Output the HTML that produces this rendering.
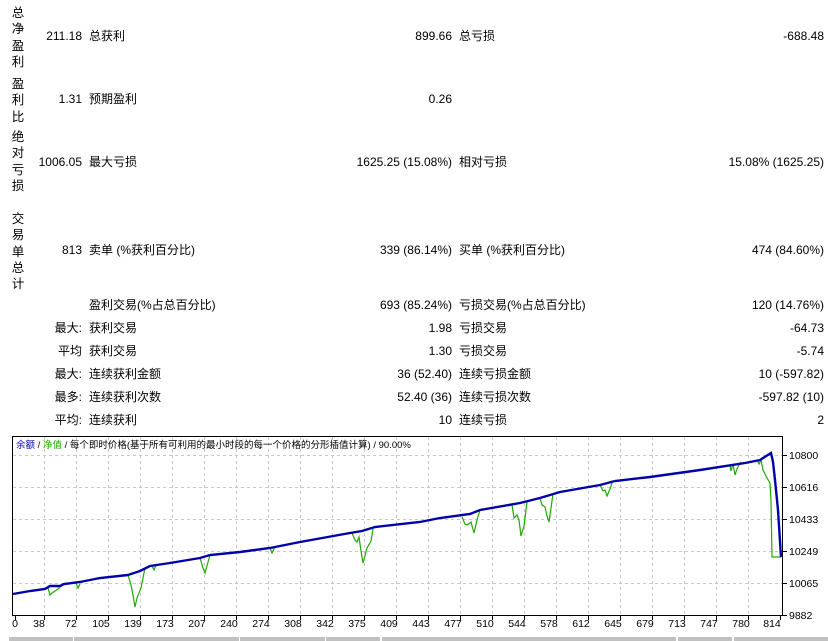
<!DOCTYPE html><html><head><meta charset="utf-8"><style>
body{margin:0;width:828px;height:641px;background:#fff;position:relative;overflow:hidden;font-family:"Liberation Sans","Noto Sans CJK SC",sans-serif;font-size:12px;color:#000}
.t{position:absolute;white-space:nowrap;line-height:14px}
.r{text-align:right}
.v{position:absolute;left:10px;width:16px;line-height:16.3px;text-align:center;font-size:12.5px}
</style></head><body>
<div class="v" style="top:5px">总<br>净<br>盈<br>利</div>
<div class="v" style="top:76px">盈<br>利<br>比</div>
<div class="v" style="top:129px">绝<br>对<br>亏<br>损</div>
<div class="v" style="top:211px">交<br>易<br>单<br>总<br>计</div>

<div class="t r" style="right:746px;top:29px">211.18</div><div class="t" style="left:89px;top:29px">总获利</div>
<div class="t r" style="right:376px;top:29px">899.66</div><div class="t" style="left:459px;top:29px">总亏损</div>
<div class="t r" style="right:4px;top:29px">-688.48</div>

<div class="t r" style="right:746px;top:92px">1.31</div><div class="t" style="left:89px;top:92px">预期盈利</div>
<div class="t r" style="right:376px;top:92px">0.26</div>

<div class="t r" style="right:746px;top:155px">1006.05</div><div class="t" style="left:89px;top:155px">最大亏损</div>
<div class="t r" style="right:376px;top:155px">1625.25 (15.08%)</div><div class="t" style="left:459px;top:155px">相对亏损</div>
<div class="t r" style="right:4px;top:155px">15.08% (1625.25)</div>

<div class="t r" style="right:746px;top:243px">813</div><div class="t" style="left:89px;top:243px">卖单 (%获利百分比)</div>
<div class="t r" style="right:376px;top:243px">339 (86.14%)</div><div class="t" style="left:459px;top:243px">买单 (%获利百分比)</div>
<div class="t r" style="right:4px;top:243px">474 (84.60%)</div>

<div class="t" style="left:89px;top:298px">盈利交易(%占总百分比)</div>
<div class="t r" style="right:376px;top:298px">693 (85.24%)</div><div class="t" style="left:459px;top:298px">亏损交易(%占总百分比)</div>
<div class="t r" style="right:4px;top:298px">120 (14.76%)</div>

<div class="t r" style="right:746px;top:321px">最大:</div><div class="t" style="left:89px;top:321px">获利交易</div>
<div class="t r" style="right:376px;top:321px">1.98</div><div class="t" style="left:459px;top:321px">亏损交易</div>
<div class="t r" style="right:4px;top:321px">-64.73</div>

<div class="t r" style="right:746px;top:344px">平均</div><div class="t" style="left:89px;top:344px">获利交易</div>
<div class="t r" style="right:376px;top:344px">1.30</div><div class="t" style="left:459px;top:344px">亏损交易</div>
<div class="t r" style="right:4px;top:344px">-5.74</div>

<div class="t r" style="right:746px;top:367px">最大:</div><div class="t" style="left:89px;top:367px">连续获利金额</div>
<div class="t r" style="right:376px;top:367px">36 (52.40)</div><div class="t" style="left:459px;top:367px">连续亏损金额</div>
<div class="t r" style="right:4px;top:367px">10 (-597.82)</div>

<div class="t r" style="right:746px;top:390px">最多:</div><div class="t" style="left:89px;top:390px">连续获利次数</div>
<div class="t r" style="right:376px;top:390px">52.40 (36)</div><div class="t" style="left:459px;top:390px">连续亏损次数</div>
<div class="t r" style="right:4px;top:390px">-597.82 (10)</div>

<div class="t r" style="right:746px;top:413px">平均:</div><div class="t" style="left:89px;top:413px">连续获利</div>
<div class="t r" style="right:376px;top:413px">10</div><div class="t" style="left:459px;top:413px">连续亏损</div>
<div class="t r" style="right:4px;top:413px">2</div>

<svg style="position:absolute;left:0;top:0" width="828" height="641" font-family="Liberation Sans, Noto Sans CJK SC, sans-serif" font-size="11">
<g stroke="#c8c8c8" stroke-dasharray="3,3" stroke-width="1">
<path d="M13 455.5H782M13 487.5H782M13 519.5H782M13 551.5H782M13 583.5H782"/>
<path d="M44.5 437V614M76.5 437V614M108.5 437V614M140.5 437V614M172.5 437V614M204.5 437V614M236.5 437V614M268.5 437V614M300.5 437V614M332.5 437V614M364.5 437V614M396.5 437V614M428.5 437V614M460.5 437V614M492.5 437V614M524.5 437V614M556.5 437V614M588.5 437V614M620.5 437V614M652.5 437V614M684.5 437V614M716.5 437V614M748.5 437V614"/>
</g>
<rect x="12.5" y="436.5" width="770" height="179" fill="none" stroke="#000"/>
<path d="M783 455.5h4M783 487.5h4M783 519.5h4M783 551.5h4M783 583.5h4M783 615.5h4M15.5 616v4M44.5 616v4M76.5 616v4M108.5 616v4M140.5 616v4M172.5 616v4M204.5 616v4M236.5 616v4M268.5 616v4M300.5 616v4M332.5 616v4M364.5 616v4M396.5 616v4M428.5 616v4M460.5 616v4M492.5 616v4M524.5 616v4M556.5 616v4M588.5 616v4M620.5 616v4M652.5 616v4M684.5 616v4M716.5 616v4M748.5 616v4M780.5 616v4" stroke="#000"/>
<path fill="none" stroke="#1faa00" stroke-width="1.2" d="M48 588 L50 595 L52 593 L58 589 L62 585 M76 583 L78 588 L80 584 M128 575 L131 585 L133 595 L135 607 L137 598 L141 588 L145 568 M152 566 L154 570 L156 565 M200 558 L203 568 L205 573 L210 555 M270 548 L272 553 L275 547 M352 533 L355 540 L357 542 L359 537 L361 551 L363 563 L367 548 L371 541 L373 529 M462 517 L465 524 L467 525 L471 522 L474 533 L477 520 L480 510 M512 505 L514 518 L517 515 L519 520 L521 536 L524 526 L527 502 M540 498 L542 505 L545 507 L547 516 L549 522 L551 508 L553 494 M600 485 L603 491 L605 490 L607 496 L610 489 L612 483 M730 465 L731 471 L733 464 L735 475 L737 469 L739 465 L741 462 M757 460 L759 464 L761 460 L763 470 L767 478 L770 483 L771 501 L772 557 L781 557"/>
<path fill="none" stroke="#0000aa" stroke-width="2.4" d="M13 594 L30 591 L45 589 L50 586 L60 586 L64 584 L80 582 L100 578 L128 575 L140 571 L150 566 L170 563 L200 558 L210 555 L240 552 L270 548 L300 542 L350 533 L362 531 L375 527 L420 522 L440 518 L470 514 L480 510 L520 503 L540 498 L560 492 L600 485 L615 481 L650 477 L700 470 L745 463 L760 460 L771 453 L773 462 L775 480 L778 510 L781 557"/>
<g fill="#000" font-size="10.5">
<text x="789" y="459">10800</text><text x="789" y="491">10616</text><text x="789" y="523">10433</text><text x="789" y="555">10249</text><text x="789" y="587">10065</text><text x="789" y="619">9882</text>
<g text-anchor="middle"><text x="15" y="627">0</text><text x="39" y="627">38</text><text x="71" y="627">72</text><text x="101" y="627">105</text><text x="133" y="627">139</text><text x="165" y="627">173</text><text x="197" y="627">207</text><text x="229" y="627">240</text><text x="261" y="627">274</text><text x="293" y="627">308</text><text x="325" y="627">342</text><text x="357" y="627">375</text><text x="389" y="627">409</text><text x="421" y="627">443</text><text x="453" y="627">477</text><text x="485" y="627">510</text><text x="517" y="627">544</text><text x="549" y="627">578</text><text x="581" y="627">612</text><text x="613" y="627">645</text><text x="645" y="627">679</text><text x="677" y="627">713</text><text x="709" y="627">747</text><text x="741" y="627">780</text><text x="772" y="627">814</text></g>
</g>
<text x="16" y="448" font-size="9.5"><tspan fill="#0000aa">余额</tspan> / <tspan fill="#1faa00">净值</tspan> / 每个即时价格(基于所有可利用的最小时段的每一个价格的分形插值计算) / 90.00%</text>
<g fill="#c0c0c0"><rect x="9" y="637" width="64" height="4"/><rect x="74" y="637" width="165" height="4"/><rect x="240" y="637" width="85" height="4"/><rect x="326" y="637" width="54" height="4"/><rect x="382" y="637" width="294" height="4"/><rect x="678" y="637" width="54" height="4"/><rect x="734" y="637" width="94" height="4"/></g>
</svg>
</body></html>
